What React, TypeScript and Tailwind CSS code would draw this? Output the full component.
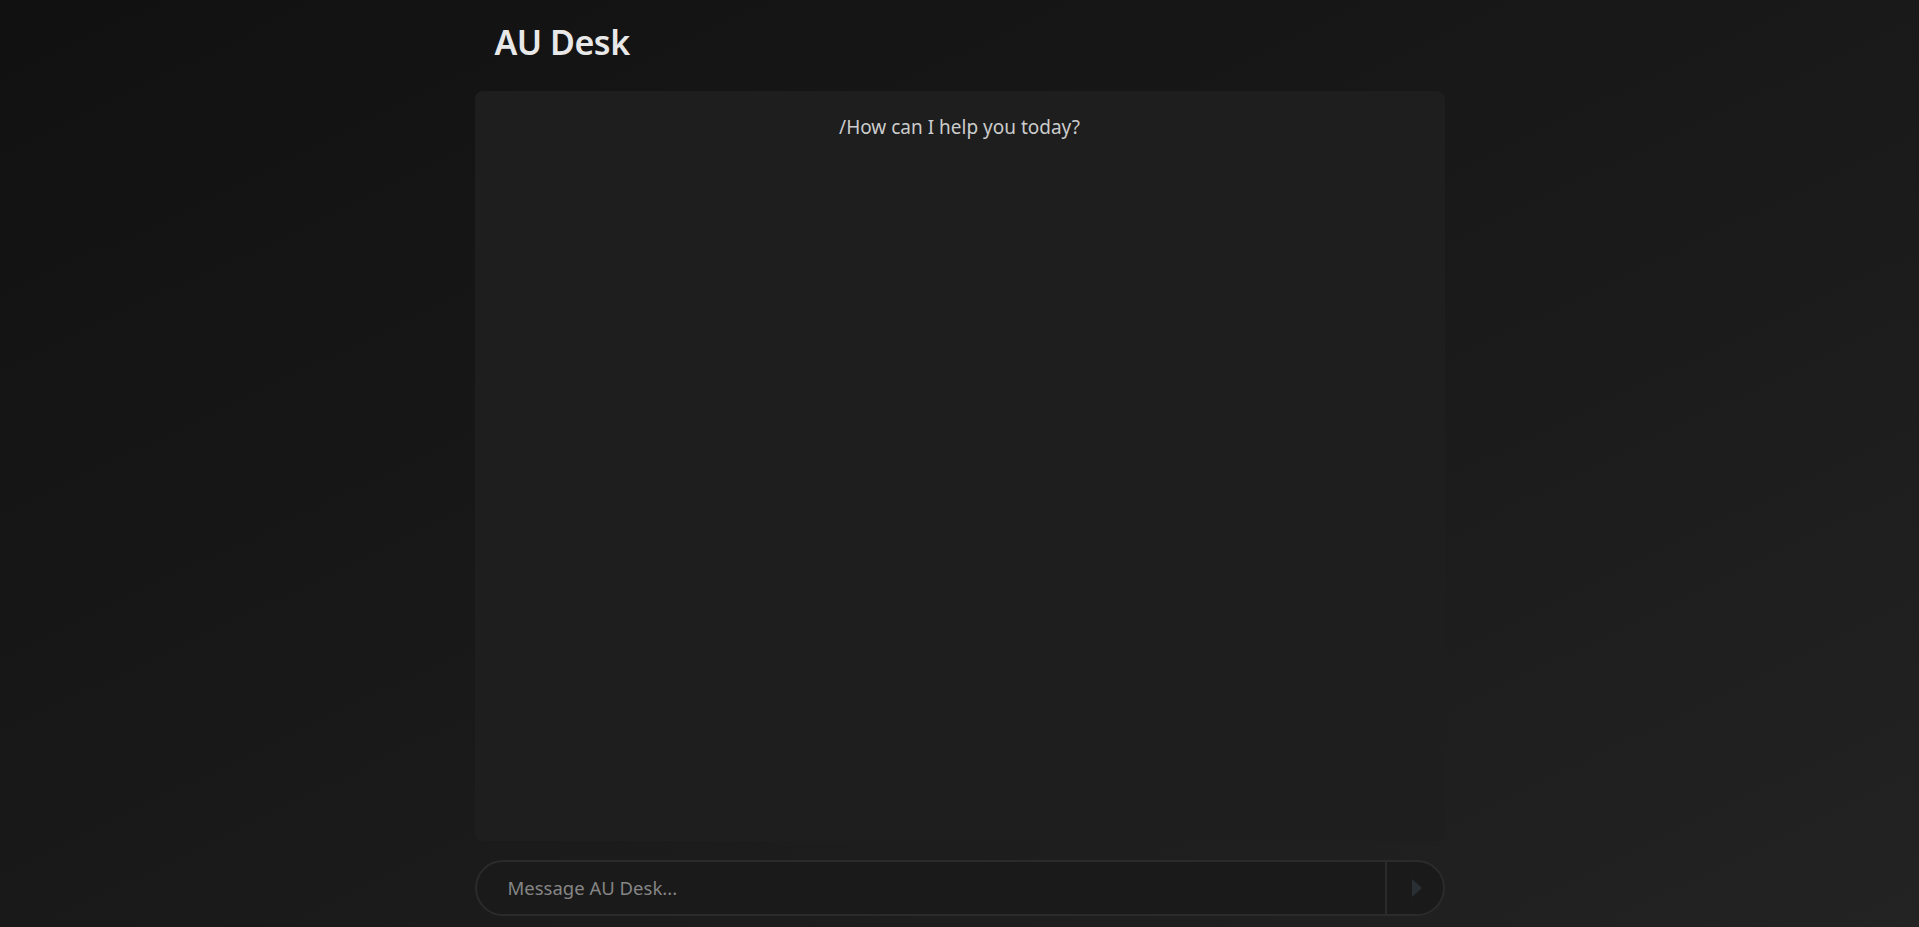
import React, { useState } from 'react'

export default function App() {
    const [message, setMessage] = useState('')

    return (
        <div
            className="min-h-screen w-full bg-gradient-to-br from-[#111111] via-[#191919] to-[#232323] text-[#e6e6e6] flex flex-col items-center"
            style={{ fontFamily: '"Noto Sans", "Open Sans", sans-serif' }}
        >
            <div className="w-[970px] flex flex-col">
                <header className="h-[91px] px-5 flex items-center">
                    <h1 className="text-[34px] font-semibold tracking-[-0.5px] text-[#e8e8e8] -mt-[6px]">AU Desk</h1>
                </header>

                <div className="h-[750px] rounded-lg bg-[#1e1e1e] flex flex-col items-center pt-[22px]">
                    <p className="text-[19px] text-[#cccccc]">/How can I help you today?</p>
                </div>

                <form
                    className="mt-[19px] h-[56px] flex rounded-full border-2 border-[#2b2b2b] bg-[#1a1a1a] overflow-hidden"
                    onSubmit={(e) => e.preventDefault()}
                >
                    <input
                        value={message}
                        onChange={(e) => setMessage(e.target.value)}
                        placeholder="Message AU Desk..."
                        className="flex-1 bg-transparent pl-[31px] pr-4 text-[18.5px] text-[#ddd] placeholder:text-[#858585] outline-none"
                    />
                    <button
                        type="submit"
                        className="w-[58px] border-l-2 border-[#2b2b2b] flex items-center justify-center"
                    >
                        <svg width="12" height="20" viewBox="0 0 12 20" className="ml-[5px]">
                            <path d="M1 1 L11 10 L1 19 Z" fill="#2a2f36" />
                        </svg>
                    </button>
                </form>
            </div>
        </div>
    )
}
